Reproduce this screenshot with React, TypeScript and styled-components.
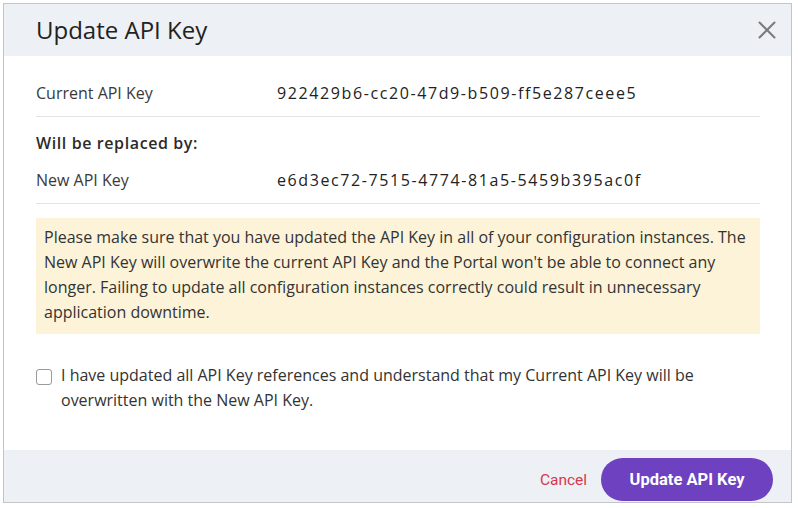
import { useState } from 'react'
import styled, { createGlobalStyle } from 'styled-components'

const GlobalStyle = createGlobalStyle`
  html, body {
    margin: 0;
    padding: 0;
    background: #ffffff;
  }
  body {
    font-family: 'Open Sans', 'Liberation Sans', sans-serif;
    color: #333333;
  }
`

const Page = styled.div`
  padding: 3px;
`

const Dialog = styled.div`
  width: 787px;
  border: 1px solid #c4c4c4;
  background: #ffffff;
  display: flex;
  flex-direction: column;
`

const Header = styled.div`
  height: 52px;
  background: #edf0f4;
  display: flex;
  align-items: center;
  justify-content: space-between;
  padding: 0 11px 0 32px;
`

const Title = styled.h2`
  margin: 0;
  font-size: 24px;
  font-weight: 400;
  color: #222222;
  line-height: 30px;
`

const CloseButton = styled.button`
  border: 0;
  background: transparent;
  padding: 4px;
  display: flex;
  cursor: pointer;
`

const Body = styled.div`
  padding: 25px 31px 37px 32px;
`

const KeyRow = styled.div`
  display: grid;
  grid-template-columns: 241px 1fr;
  align-items: center;
  line-height: 24px;
  padding-bottom: 11px;
  border-bottom: 1px solid #e3e3e3;
  margin-bottom: 14px;
`

const Label = styled.span`
  font-size: 16px;
  color: #3a3a3a;
`

const KeyValue = styled.span`
  font-size: 16px;
  letter-spacing: 1.6px;
  color: #222222;
`

const SubHeading = styled.div`
  font-size: 16px;
  font-weight: 600;
  letter-spacing: 0.6px;
  line-height: 24px;
  color: #2b2b2b;
  margin-bottom: 13px;
`

const Warning = styled.div`
  background: #fdf3d9;
  padding: 7px 10px 9px 8px;
  font-size: 16px;
  line-height: 25px;
  color: #333333;
`

const CheckRow = styled.label`
  display: flex;
  align-items: flex-start;
  gap: 9px;
  margin-top: 29px;
  font-size: 16px;
  line-height: 25px;
  color: #333333;
  cursor: pointer;
`

const Box = styled.span<{ $checked: boolean }>`
  flex: none;
  width: 14px;
  height: 14px;
  margin-top: 6px;
  border: 1px solid #9a9a9a;
  border-radius: 3px;
  background: ${p => (p.$checked ? '#6e41c0' : '#ffffff')};
`

const HiddenInput = styled.input`
  display: none;
`

const Footer = styled.div`
  background: #edf0f4;
  display: flex;
  justify-content: flex-end;
  align-items: center;
  gap: 14px;
  padding: 8px 18px 1px;
`

const CancelButton = styled.button`
  border: 0;
  background: transparent;
  font-family: 'Roboto', 'Liberation Sans', sans-serif;
  font-size: 15.5px;
  color: #d6384f;
  padding: 0;
  cursor: pointer;
`

const PrimaryButton = styled.button`
  height: 43px;
  padding: 0 28.5px;
  border: 0;
  border-radius: 22px;
  background: #6e41c0;
  color: #ffffff;
  font-family: 'Roboto', 'Liberation Sans', sans-serif;
  font-size: 16.5px;
  font-weight: 700;
  cursor: pointer;
`

export default function App() {
  const [checked, setChecked] = useState(false)
  return (
    <Page>
      <GlobalStyle />
      <Dialog>
        <Header>
          <Title>Update API Key</Title>
          <CloseButton aria-label="Close">
            <svg width="18" height="18" viewBox="0 0 18 18">
              <path d="M1.5 1.5 L16.5 16.5 M16.5 1.5 L1.5 16.5" stroke="#7a7a7a" strokeWidth="2" strokeLinecap="round" />
            </svg>
          </CloseButton>
        </Header>
        <Body>
          <KeyRow>
            <Label>Current API Key</Label>
            <KeyValue>922429b6-cc20-47d9-b509-ff5e287ceee5</KeyValue>
          </KeyRow>
          <SubHeading>Will be replaced by:</SubHeading>
          <KeyRow>
            <Label>New API Key</Label>
            <KeyValue>e6d3ec72-7515-4774-81a5-5459b395ac0f</KeyValue>
          </KeyRow>
          <Warning>
            Please make sure that you have updated the API Key in all of your configuration instances. The
            New API Key will overwrite the current API Key and the Portal won't be able to connect any
            longer. Failing to update all configuration instances correctly could result in unnecessary
            application downtime.
          </Warning>
          <CheckRow>
            <HiddenInput type="checkbox" checked={checked} onChange={e => setChecked(e.target.checked)} />
            <Box $checked={checked} />
            <span>
              I have updated all API Key references and understand that my Current API Key will be
              overwritten with the New API Key.
            </span>
          </CheckRow>
        </Body>
        <Footer>
          <CancelButton>Cancel</CancelButton>
          <PrimaryButton>Update API Key</PrimaryButton>
        </Footer>
      </Dialog>
    </Page>
  )
}
